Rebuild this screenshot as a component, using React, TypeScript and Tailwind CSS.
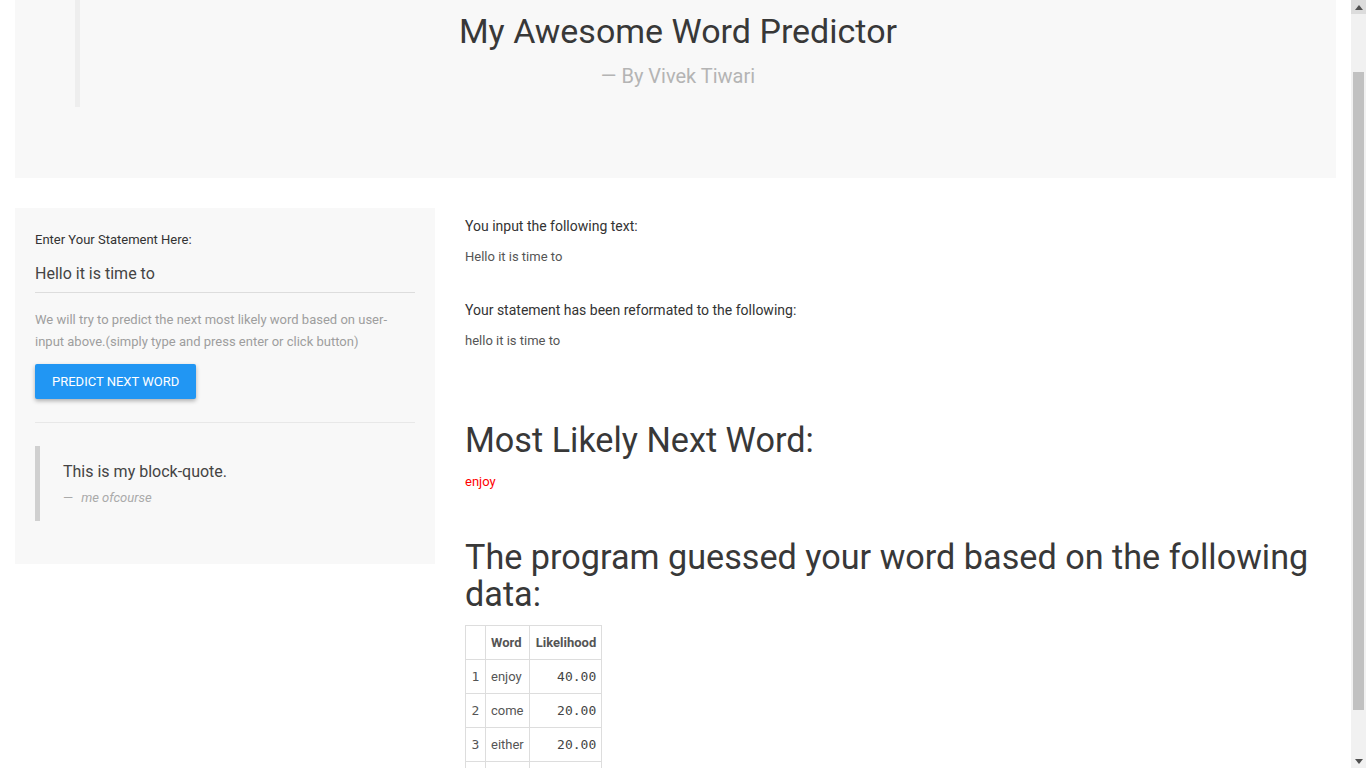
import React from 'react';

const rows = [
  { n: '1', word: 'enjoy', p: '40.00' },
  { n: '2', word: 'come', p: '20.00' },
  { n: '3', word: 'either', p: '20.00' },
  { n: '', word: '', p: '' },
];

const mono = { fontFamily: '"DejaVu Sans Mono", "Liberation Mono", monospace' };

const Scrollbar: React.FC = () => (
  <div className="w-[15px] h-full bg-[#f1f1f1] flex flex-col">
    <div className="h-[14px] bg-[#dcdcdc] flex items-center justify-center">
      <svg width="8" height="5" viewBox="0 0 8 5">
        <path d="M0 5 L4 0 L8 5 Z" fill="#505050" />
      </svg>
    </div>
    <div className="flex-1 px-[2px] pt-[58px] pb-[44px] flex">
      <div className="flex-1 bg-[#c1c1c1]" />
    </div>
    <div className="h-[14px] flex items-center justify-center">
      <svg width="8" height="5" viewBox="0 0 8 5">
        <path d="M0 0 L8 0 L4 5 Z" fill="#505050" />
      </svg>
    </div>
  </div>
);

const App: React.FC = () => {
  return (
    <div
      className="h-[768px] w-full flex overflow-hidden bg-white text-[#333]"
      style={{ fontFamily: 'Roboto, "Liberation Sans", sans-serif' }}
    >
      <div className="flex-1 px-[15px] overflow-hidden">
        {/* header */}
        <div className="h-[178px] bg-[#f8f8f8]">
          <div className="mx-[60px] h-[107px] border-l-[5px] border-[#eeeeee] pt-[12px] text-center">
            <h1 className="text-[34px] leading-[38px] text-[#383838]">My Awesome Word Predictor</h1>
            <p className="mt-[11px] text-[20px] leading-[30px] text-[#b4b4b4]">— By Vivek Tiwari</p>
          </div>
        </div>

        <div className="mt-[30px] flex gap-[30px] items-start">
          {/* sidebar */}
          <div className="w-[420px] shrink-0 bg-[#f8f8f8] px-[20px] pt-[22px] pb-[43px]">
            <label className="block text-[13px] leading-[20px] text-[#333]">Enter Your Statement Here:</label>
            <div className="mt-[6px] h-[37px] border-b border-[#dddddd] flex items-center text-[16px] text-[#444]">
              Hello it is time to
            </div>
            <p className="mt-[16px] text-[13px] leading-[22px] text-[#9e9e9e]">
              We will try to predict the next most likely word based on user-input above.(simply type and press enter or click button)
            </p>
            <button className="mt-[11px] h-[35px] px-[17px] bg-[#2196f3] text-white text-[13px] uppercase rounded-[2px] shadow-[0_2px_4px_rgba(0,0,0,0.3)]">
              Predict next word
            </button>
            <div className="mt-[23px] border-t border-[#e8e8e8]" />
            <blockquote className="mt-[23px] border-l-[5px] border-[#d0d0d0] pl-[23px] pt-[14px] pb-[13px]">
              <p className="text-[16px] leading-[24px] text-[#444]">This is my block-quote.</p>
              <p className="mt-[4px] text-[13px] leading-[20px] italic text-[#aaaaaa]">
                <span className="not-italic mr-[8px]">—</span>me ofcourse
              </p>
            </blockquote>
          </div>

          {/* main */}
          <div className="flex-1 pt-[8px]">
            <p className="text-[14px] leading-[20px] text-[#333]">You input the following text:</p>
            <p className="mt-[11px] text-[13px] leading-[20px] text-[#555]">Hello it is time to</p>
            <p className="mt-[33px] text-[14px] leading-[20px] text-[#333]">Your statement has been reformated to the following:</p>
            <p className="mt-[11px] text-[13px] leading-[20px] text-[#555]">hello it is time to</p>

            <h3 className="mt-[70px] text-[34.2px] leading-[38px] text-[#383838]">Most Likely Next Word:</h3>
            <p className="mt-[13px] text-[13px] leading-[20px] text-[#ff0000]">enjoy</p>

            <h3 className="mt-[47px] text-[34.2px] leading-[37px] text-[#383838] pr-[15px]">
              The program guessed your word based on the following data:
            </h3>

            <table className="mt-[12px] border-collapse text-[13px] text-[#333]">
              <thead>
                <tr className="h-[34px]">
                  <th className="border border-[#dddddd] w-[20px]" />
                  <th className="border border-[#dddddd] px-[5px] text-left font-bold text-[#555]">Word</th>
                  <th className="border border-[#dddddd] pl-[6px] pr-[5px] text-right font-bold text-[#555]">Likelihood</th>
                </tr>
              </thead>
              <tbody>
                {rows.map((r, i) => (
                  <tr key={i} className="h-[34px]">
                    <td className="border border-[#dddddd] px-[5px] text-center text-[13px] text-[#555]" style={mono}>
                      {r.n}
                    </td>
                    <td className="border border-[#dddddd] px-[5px] text-[#555]">{r.word}</td>
                    <td className="border border-[#dddddd] pl-[6px] pr-[5px] text-right text-[13px] text-[#444]" style={mono}>
                      {r.p}
                    </td>
                  </tr>
                ))}
              </tbody>
            </table>
          </div>
        </div>
      </div>
      <Scrollbar />
    </div>
  );
};

export default App;
